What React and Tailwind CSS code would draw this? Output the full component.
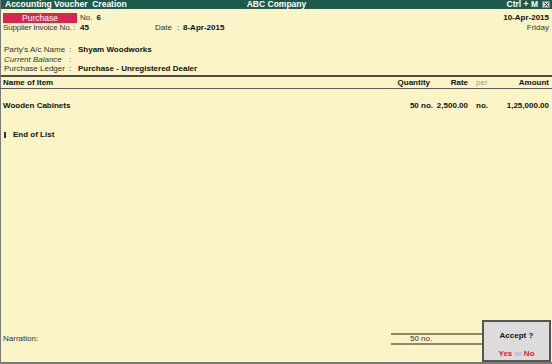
import React from "react";

// Tally-style purchase voucher screen
const font = { fontFamily: '"Liberation Sans", Arial, sans-serif' };

const Field = ({ label, value, italic }) => (
  <div className="flex h-[9.5px] items-center whitespace-nowrap">
    <span className={`w-[65px] shrink-0 ${italic ? "italic" : ""}`}>{label}</span>
    <span className="w-[9px] shrink-0">:</span>
    <span className="font-bold text-[#111]">{value}</span>
  </div>
);

const Row = ({ name, qty, rate, per, amount, header }) => (
  <div
    className={`flex items-center px-[2px] whitespace-nowrap ${header ? "h-[11px]" : "h-[10px]"} font-bold text-[#111]`}
  >
    <span className="flex-1">{name}</span>
    <span className={`w-[50px] text-right ${header ? "pr-[3px]" : ""}`}>{qty}</span>
    <span className="w-[35px] text-right">{rate}</span>
    <span className={`w-[23px] pl-[8px] ${header ? "font-normal text-[#9a9a9a]" : ""}`}>
      {per}
    </span>
    <span className="w-[59px] text-right pr-[1px]">{amount}</span>
  </div>
);

export default function App() {
  return (
    <div
      style={font}
      className="w-[552px] h-[364px] flex flex-col bg-[#fbf4c7] text-[8px] leading-[10px] text-[#333] overflow-hidden border-l border-b-2 border-[#7a7a7a]"
    >
      {/* title bar */}
      <div className="h-[9px] grid grid-cols-[1fr_auto_1fr] items-center bg-[#1d5a4b] text-white font-bold text-[8.5px] leading-[9px] whitespace-nowrap">
        <span className="pl-[4px] whitespace-pre">Accounting Voucher  Creation</span>
        <span>ABC Company</span>
        <div className="flex justify-end items-center">
          <span>Ctrl + M</span>
          <span className="ml-[4px] mr-[2px] w-[8px] h-[7px] bg-[#d6d6d6] border border-[#888] flex items-center justify-center">
            <svg width="5" height="5" viewBox="0 0 5 5">
              <path d="M0.5 0.5L4.5 4.5M4.5 0.5L0.5 4.5" stroke="#333" strokeWidth="1" />
            </svg>
          </span>
        </div>
      </div>

      {/* voucher head */}
      <div className="flex justify-between px-[2px] pt-[4px] whitespace-nowrap">
        <div className="flex flex-col">
          <div className="flex h-[10px] items-center">
            <span className="w-[74px] h-[10px] bg-[#d9264f] text-white text-center text-[8.5px] leading-[10px]">
              Purchase
            </span>
            <span className="ml-[3px]">No.</span>
            <span className="ml-[4px] font-bold text-[#111]">6</span>
          </div>
          <div className="flex h-[10px] items-center">
            <span className="w-[70px] shrink-0 tracking-[-0.15px]">Supplier Invoice No.</span>
            <span className="w-[7px] shrink-0">:</span>
            <span className="w-[75px] shrink-0 font-bold text-[#111]">45</span>
            <span className="w-[22px] shrink-0">Date</span>
            <span className="w-[6px] shrink-0">:</span>
            <span className="font-bold text-[#111]">8-Apr-2015</span>
          </div>
        </div>
        <div className="flex flex-col items-end pr-[1px]">
          <span className="h-[10px] font-bold text-[#111]">10-Apr-2015</span>
          <span className="h-[10px]">Friday</span>
        </div>
      </div>

      <div className="flex flex-col px-[3px] pt-[12px] leading-[9.5px]">
        <Field label="Party's A/c Name" value="Shyam Woodworks" />
        <Field label="Current Balance" value="" italic />
        <Field label="Purchase Ledger" value="Purchase - Unregistered Dealer" />
      </div>

      {/* item table */}
      <div className="mt-[1.5px] border-t-2 border-[#4e4e44]" />
      <Row header name="Name of Item" qty="Quantity" rate="Rate" per="per" amount="Amount" />
      <div className="border-t border-[#5a5a50]" />

      <div className="flex-1 flex flex-col pt-[12px]">
        <Row name="Wooden Cabinets" qty="50 no." rate="2,500.00" per="no." amount="1,25,000.00" />
        <div className="flex items-center h-[10px] mt-[19px] px-[3px] font-bold text-[#111]">
          <span className="w-[2px] h-[6px] bg-[#333]" />
          <span className="ml-[7px]">End of List</span>
        </div>
      </div>

      {/* bottom */}
      <div className="flex items-start h-[42px]">
        <span className="flex-1 pl-[2px] pt-[14px]">Narration:</span>
        <div className="mt-[13px] w-[91px] h-[12px] border-t-2 border-b-2 border-[#8d8a6c] pl-[19px] leading-[8px]">
          50 no.
        </div>
        <div className="w-[69px] h-[42px] mr-[1px] bg-[#dcdcdc] border-2 border-[#555] flex flex-col items-center">
          <span className="mt-[9px] font-bold text-[#111]">Accept ?</span>
          <span className="mt-[8px] font-bold text-[#f01428]">
            Yes <span className="font-normal text-[#a8a8a8]">or</span> No
          </span>
        </div>
      </div>
    </div>
  );
}
